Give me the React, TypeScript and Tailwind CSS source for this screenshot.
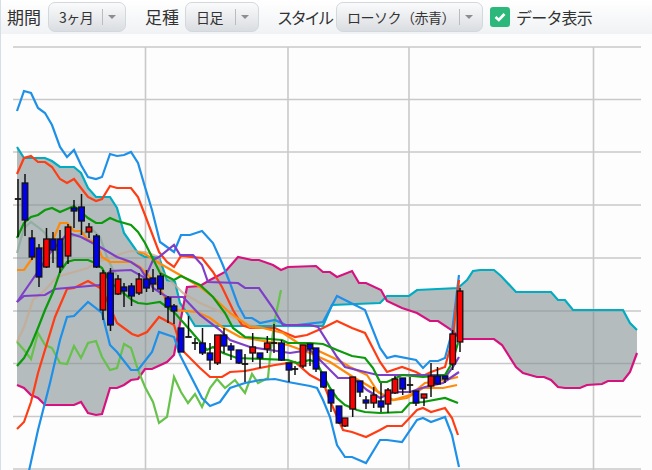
const FONT = "font-['Noto_Sans_CJK_JP','Noto_Sans_CJK_SC',sans-serif]"

const cloudTop = '17,147 24,158 45,158 52,161 60,167 74,167 81,173 88,188 96,197 110,197 117,208 124,233 138,253 145,257 159,257 167,280 175,282 180,303 187,313 195,326 323,326 332,305 380,303 387,296 409,296 417,290 458,288 467,280 473,271 480,270 494,270 501,276 516,292 551,292 558,300 565,300 573,310 623,310 630,323 637,330'
const cloudBottom = '17,385 24,388 31,395 38,398 45,405 74,405 81,402 88,413 96,415 102,414 110,388 117,388 124,385 131,380 138,379 145,369 152,369 167,362 174,355 187,287 200,286 210,280 225,272 238,257 252,260 259,260 273,265 281,270 288,267 316,266 323,272 330,272 337,277 352,271 359,283 366,283 381,290 387,301 402,308 417,313 430,321 438,321 453,331 460,339 465,339 494,339 502,345 516,367 523,373 537,377 544,377 551,380 558,387 565,388 580,388 587,385 602,384 608,381 623,381 630,372 637,353'
const cloudFill = cloudTop + ' ' + cloudBottom.split(' ').reverse().join(' ')

const lines: [string, string][] = [
  ['#8aa89a', '17,253 24,228 31,222 38,227 45,233 52,245 60,257 67,237 78,235 93,230 100,237 107,257 113,270 117,275'],
  ['#c8a98f', '17,342 24,327 33,300 45,290 57,277 74,272 88,268 96,262 110,258 123,253 131,251 145,252 159,257 160,270 183,293 200,303 223,313 250,325 263,328'],
  ['#66c24a', '17,342 24,350 31,359 38,333 45,345 52,348 60,363 67,364 74,346 81,358 88,343 96,341 102,357 110,370 117,368 124,344 131,348 138,370 145,387 153,402 159,423 167,417 174,377 181,392 188,403 195,394 202,407 210,388 217,379 225,388 235,380 245,393 252,374 258,383 268,378 270,357 274,324 281,290'],
  ['#1e90e8', '17,111 24,91 31,93 38,108 45,113 52,125 60,147 67,157 74,150 81,165 88,177 96,179 102,177 110,154 117,156 124,155 131,152 138,163 145,187 152,210 160,242 174,252 181,235 190,235 202,231 213,243 222,263 230,283 238,305 245,318 252,318 260,323 275,320 288,326 323,322 337,296 365,310 380,348 387,358 395,356 416,360 423,368 430,361 438,361 445,358 452,332 459,275'],
  ['#1e90e8', '27,480 38,430 50,383 60,340 67,317 74,316 88,302 102,313 110,345 117,352 131,370 138,370 152,352 159,332 174,337 180,355 202,398 210,406 220,402 230,388 245,383 260,380 275,379 288,382 310,386 317,388 323,400 330,417 337,445 345,457 352,457 366,463 380,440 387,440 402,442 417,420 423,418 431,422 445,417 452,435 459,467'],
  ['#ff3d14', '17,174 24,158 31,156 38,162 45,162 52,167 60,179 67,183 74,179 81,188 88,197 96,201 102,199 110,186 117,188 131,188 138,197 145,215 159,252 167,262 174,267 181,256 202,258 213,272 222,287 233,310 242,325 250,328 275,328 283,332 295,337 307,335 323,328 337,321 352,328 365,333 380,362 387,372 402,367 416,372 423,376 431,372 445,367 453,337 459,280'],
  ['#ff3d14', '17,429 24,422 31,402 38,373 55,317 67,289 74,288 88,281 102,289 117,323 132,334 138,336 147,332 159,317 174,325 182,350 200,368 210,377 222,377 230,372 245,371 275,365 295,362 310,375 323,382 331,403 343,430 352,432 366,437 380,430 387,426 402,426 417,410 423,408 431,412 445,408 452,418 458,435'],
  ['#ff8a0a', '17,270 24,270 31,260 40,250 53,240 60,223 67,223 74,231 81,231 88,240 96,242 102,257 110,262 131,262 140,267 153,280 160,288 167,302 175,310 197,312 210,318 222,327 240,337 288,345 310,353 330,362 353,377 367,385 380,393 393,400 407,398 423,388 443,388 457,385'],
  ['#ff8a0a', '138,252 145,254 159,263 180,275 200,287 213,297 230,313 250,327 263,328 283,333 298,343 310,347 323,353 338,360 350,367 367,375 378,392 393,400 410,395 425,383 445,380 458,377'],
  ['#7e3fc8', '17,302 37,273 50,253 68,233 81,237 100,247 117,257 131,262 140,268 153,288 167,297 183,297 200,315 220,330 230,340 250,347 270,350 290,353 310,350 323,363 338,378 353,378 367,390 380,398 393,392 410,392 425,387 443,383 459,372'],
  ['#7e3fc8', '17,302 24,296 45,295 55,289 100,285 110,271 131,270 145,278 153,260 159,257 174,245 180,255 193,255 202,265 208,282 238,283 245,288 259,288 273,308 283,325 310,325 318,327 337,357 345,367 365,372 378,375 447,375 453,367 459,357'],
  ['#0a9a0a', '17,238 24,223 31,217 38,215 45,210 52,208 60,212 74,206 81,212 88,218 96,223 102,223 110,218 117,221 131,225 138,232 145,243 160,273 174,280 181,276 200,285 213,297 225,313 233,328 245,337 282,340 288,343 310,343 323,344 337,350 352,356 365,358 373,368 380,382 387,382 402,375 423,377 445,375 452,363 458,343'],
  ['#0a9a0a', '17,366 24,358 31,345 38,328 45,310 53,292 60,272 67,262 74,260 88,260 95,263 102,268 110,282 132,300 138,303 147,304 153,303 160,302 174,312 190,330 207,350 213,347 223,353 237,358 288,360 297,363 310,360 317,363 323,375 330,388 337,398 345,405 357,410 365,412 380,413 402,412 410,403 423,402 445,398 458,403'],
]

// x, wick top, wick bottom, body top, body bottom, colour (d = doji)
const candles: [number, number, number, number, number, string][] = [
  [18, 179, 237, 199, 199, 'd'], [25, 174, 236, 183, 220, 'b'], [32, 230, 260, 238, 257, 'b'], [39, 244, 287, 248, 277, 'b'],
  [46.5, 228, 268, 239, 267, 'r'], [53, 232, 263, 239, 250, 'b'], [60, 230, 273, 239, 267, 'b'], [68, 224, 264, 227, 256, 'r'],
  [74, 200, 228, 208, 211, 'b'], [81.5, 194, 235, 207, 221, 'b'], [89, 223, 238, 227, 232, 'r'], [96.5, 234, 268, 236, 267, 'b'],
  [103, 270, 320, 273, 310, 'r'], [110.5, 268, 331, 273, 325, 'b'], [118, 275, 295, 279, 294, 'r'], [124, 283, 307, 287, 291, 'b'],
  [131.5, 283, 306, 286, 296, 'b'], [139, 273, 295, 279, 293, 'r'], [146.5, 270, 292, 279, 288, 'b'], [153, 269, 292, 278, 284, 'b'],
  [160.5, 273, 295, 276, 289, 'b'], [168, 296, 323, 298, 307, 'b'], [174, 304, 324, 306, 311, 'b'], [181, 328, 352, 328, 352, 'b'],
  [188.5, 316, 337, 337, 337, 'd'], [195, 338, 350, 343, 343, 'd'], [202.5, 328, 355, 343, 353, 'b'], [210, 343, 370, 353, 360, 'b'],
  [217.5, 335, 365, 335, 363, 'r'], [224, 328, 353, 335, 346, 'b'], [231, 343, 360, 346, 350, 'b'], [239, 350, 364, 350, 363, 'b'],
  [245, 354, 382, 364, 364, 'd'], [252.7, 333, 362, 347, 353, 'r'], [260, 353, 368, 353, 358, 'b'], [267.3, 336, 353, 343, 349, 'r'],
  [274, 324, 353, 343, 343, 'd'], [281.5, 340, 361, 343, 360, 'b'], [289, 363, 382, 363, 370, 'b'], [295, 366, 375, 369, 369, 'd'],
  [303, 345, 368, 345, 366, 'r'], [310, 344, 366, 344, 349, 'b'], [316, 348, 372, 348, 369, 'b'], [323.5, 372, 388, 372, 387, 'b'],
  [331, 390, 412, 390, 403, 'b'], [339, 406, 424, 406, 423, 'b'], [345, 418, 427, 418, 426, 'r'], [352.7, 377, 417, 377, 409, 'r'],
  [360, 381, 397, 381, 392, 'b'], [366, 396, 409, 400, 403, 'b'], [373.7, 387, 408, 395, 403, 'r'], [381, 383, 412, 401, 407, 'b'],
  [388, 388, 413, 390, 404, 'r'], [395, 376, 394, 379, 393, 'r'], [402.7, 378, 395, 378, 389, 'b'], [410, 377, 393, 385, 385, 'd'],
  [416, 391, 406, 391, 403, 'b'], [424, 394, 406, 394, 398, 'r'], [431, 363, 397, 376, 386, 'r'], [437.5, 367, 385, 376, 384, 'b'],
  [445, 376, 383, 376, 379, 'b'], [452.7, 330, 370, 334, 364, 'r'], [460, 288, 352, 291, 342, 'r'],
]

function Dropdown({ label, width }: { label: string; width: string }) {
  return (
    <div className={`flex h-[30px] items-center justify-between rounded-[7px] border border-[#d3d8dc] bg-gradient-to-b from-[#fbfbfc] to-[#dadde1] pl-[10px] pr-[9px] ${width}`}>
      <span className="whitespace-nowrap text-[14px] text-[#333] tracking-[-0.5px]">{label}</span>
      <div className="flex items-center gap-[5px]">
        <div className="h-[16px] w-px bg-[#b9bdc1]" />
        <div className="h-0 w-0 border-x-[4px] border-t-[4px] border-x-transparent border-t-[#8a8e92]" />
      </div>
    </div>
  )
}

export default function App() {
  return (
    <div className={`flex h-[470px] w-[652px] flex-col overflow-hidden border-l border-[#d5dfea] bg-[#fdfdfd] ${FONT}`}>
      <div className="flex h-[34px] items-center bg-gradient-to-b from-white to-[#f0f2f4] pl-[6px] text-[#333]">
        <span className="w-[41px] text-[17px]">期間</span>
        <Dropdown label="3ヶ月" width="w-[78px]" />
        <span className="ml-[19px] w-[40px] text-[17px]">足種</span>
        <Dropdown label="日足" width="w-[74px]" />
        <span className="ml-[18px] w-[59px] whitespace-nowrap text-[16px] tracking-[-2.3px]">スタイル</span>
        <Dropdown label="ローソク（赤青）" width="w-[147px]" />
        <div className="ml-[7px] flex h-[20px] w-[20px] items-center justify-center rounded-[3px] bg-[#2db87b]">
          <svg width="14" height="14" viewBox="0 0 14 14" fill="none">
            <path d="M2.5 7 L5.8 10 L11.5 4" stroke="#fff" strokeWidth="2.6" />
          </svg>
        </div>
        <span className="ml-[6px] whitespace-nowrap text-[16px] tracking-[-0.8px]">データ表示</span>
      </div>
      <svg width="651" height="436" viewBox="1 34 651 436" className="block">
        <g stroke="#c9c9c9" strokeWidth="1.6">
          {[47, 99.5, 152, 205, 258, 311, 363.5, 416.5, 469].map((y) => (
            <line key={y} x1="13" x2="641" y1={y} y2={y} />
          ))}
          {[145.5, 288, 409, 593.5].map((x) => (
            <line key={x} x1={x} x2={x} y1="47" y2="470" />
          ))}
        </g>
        <polygon points={cloudFill} fill="#808e91" fillOpacity="0.58" />
        <polyline points={cloudTop} fill="none" stroke="#00acc1" strokeWidth="2.2" />
        <polyline points={cloudBottom} fill="none" stroke="#d6127e" strokeWidth="2.2" />
        {lines.map(([color, pts], i) => (
          <polyline key={i} points={pts} fill="none" stroke={color} strokeWidth="2.2" strokeOpacity={i < 2 ? 0.75 : 1} />
        ))}
        {candles.map(([x, wt, wb, bt, bb, c], i) => (
          <g key={i} stroke="#111">
            <line x1={x} x2={x} y1={wt} y2={wb} strokeWidth="1.5" />
            {c === 'd' ? (
              <line x1={x - 3.2} x2={x + 3.2} y1={bt} y2={bt} strokeWidth="1.8" />
            ) : (
              <rect x={x - 2.8} y={bt} width="5.6" height={bb - bt} fill={c === 'r' ? '#ff0000' : '#0000ee'} strokeWidth="1.3" />
            )}
          </g>
        ))}
      </svg>
    </div>
  )
}
